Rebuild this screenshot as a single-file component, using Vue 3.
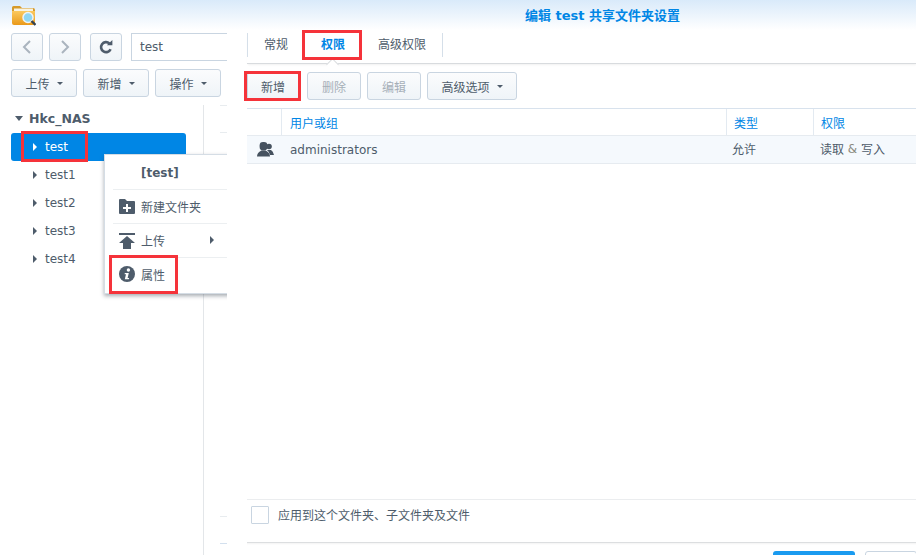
<script setup>
const leftActions = ['上传', '新增', '操作']
const folders = ['test1', 'test2', 'test3', 'test4']
const tabs = [
  { label: '常规' },
  { label: '权限', active: true },
  { label: '高级权限' },
]
</script>

<template>
  <div class="page">
    <aside class="explorer">
      <div class="title-bar">
        <svg class="app-icon" width="25" height="21" viewBox="0 0 25 21">
          <defs>
            <linearGradient id="folderFill" x1="0" y1="0" x2="0" y2="1">
              <stop offset="0" stop-color="#fbc95e" />
              <stop offset="1" stop-color="#e9991a" />
            </linearGradient>
          </defs>
          <path d="M1 2.5 Q1 1 2.5 1 H9 L11 3 H22 Q24 3 24 5 V6 H1Z" fill="#d69a2a" />
          <rect x="3" y="3.5" width="19" height="3" fill="#f8f3e2" />
          <path d="M1 6 H24 V18 Q24 20 22 20 H3 Q1 20 1 18Z" fill="url(#folderFill)" />
          <circle cx="17" cy="12.5" r="5" fill="#8fd6f2" stroke="#eef3f6" stroke-width="1.5" />
          <path d="M20.5 16 L24.5 20" stroke="#34424f" stroke-width="2.4" />
        </svg>
      </div>
      <div class="nav-row">
        <button class="btn nav-btn">
          <svg width="12" height="16" viewBox="0 0 12 16"><path d="M9 2 L3 8 L9 14" fill="none" stroke="#aab4be" stroke-width="2" /></svg>
        </button>
        <button class="btn nav-btn">
          <svg width="12" height="16" viewBox="0 0 12 16"><path d="M3 2 L9 8 L3 14" fill="none" stroke="#aab4be" stroke-width="2" /></svg>
        </button>
        <button class="btn nav-btn refresh">
          <svg width="14" height="14" viewBox="0 0 14 14">
            <path d="M11.6 9.2 A5 5 0 1 1 10.4 3.4" fill="none" stroke="#4e5c6b" stroke-width="2.6" />
            <path d="M7.8 5.2 H13.4 V0Z" fill="#4e5c6b" />
          </svg>
        </button>
        <div class="path-input">test</div>
      </div>
      <div class="action-row">
        <button v-for="a in leftActions" :key="a" class="btn action-btn">
          {{ a }}<span class="caret"></span>
        </button>
      </div>
      <div class="tree-pane">
        <div class="tree">
          <div class="tree-root"><span class="arrow-down"></span>Hkc_NAS</div>
          <div class="tree-item selected"><span class="arrow-right"></span>test</div>
          <div v-for="f in folders" :key="f" class="tree-item"><span class="arrow-right"></span>{{ f }}</div>
        </div>
        <div class="list-stub">
          <i class="stub first"></i>
          <i class="stub"></i>
          <span class="stub-gap"></span>
          <i class="stub"></i>
          <i class="stub blue"></i>
        </div>
      </div>

      <div class="context-menu">
        <div class="menu-title">[test]</div>
        <div class="menu-item">
          <svg width="16" height="15" viewBox="0 0 16 15">
            <path d="M0 1 Q0 0 1 0 H6 L8 2 H15 Q16 2 16 3 V14 Q16 15 15 15 H1 Q0 15 0 14Z" fill="#4e5c6b" />
            <path d="M7 5 H9 V8 H12 V10 H9 V13 H7 V10 H4 V8 H7Z" fill="#fff" />
          </svg>
          <span>新建文件夹</span>
        </div>
        <div class="menu-item">
          <svg width="16" height="16" viewBox="0 0 16 16">
            <rect x="0" y="0" width="16" height="2" fill="#4e5c6b" />
            <path d="M8 3 L16 10 H12 V16 H4 V10 H0Z" fill="#4e5c6b" />
          </svg>
          <span>上传</span>
          <span class="arrow-right submenu"></span>
        </div>
        <div class="menu-item">
          <svg width="16" height="16" viewBox="0 0 16 16">
            <circle cx="8" cy="8" r="8" fill="#4e5c6b" />
            <circle cx="9.4" cy="4" r="1.7" fill="#fff" />
            <path d="M5.8 7 H9.8 L8.6 12 H10.2 L9.8 13.2 H5.8 L7 8.2 H5.6Z" fill="#fff" />
          </svg>
          <span>属性</span>
        </div>
      </div>
      <div class="mark mark-test"></div>
      <div class="mark mark-prop"></div>
    </aside>

    <main class="dialog">
      <header class="dialog-title">编辑 test 共享文件夹设置</header>
      <nav class="tabs">
        <div class="tab-group">
          <div v-for="t in tabs" :key="t.label" class="tab" :class="{ active: t.active }">{{ t.label }}</div>
        </div>
      </nav>
      <div class="toolbar">
        <button class="btn tool-btn add">新增</button>
        <button class="btn tool-btn off">删除</button>
        <button class="btn tool-btn off">编辑</button>
        <button class="btn tool-btn more">高级选项<span class="caret"></span></button>
      </div>
      <div class="grid">
        <div class="grid-row grid-head">
          <div class="c-icon"></div>
          <div class="c-name">用户或组</div>
          <div class="c-type">类型</div>
          <div class="c-perm">权限</div>
        </div>
        <div class="grid-row grid-body">
          <div class="c-icon">
            <svg width="17" height="15" viewBox="0 0 17 15">
              <circle cx="12" cy="4.5" r="2.8" fill="#46525f" />
              <path d="M10 8 H14 Q16 9 17 13 H13 Q12.5 10 10 8Z" fill="#46525f" />
              <rect x="2.6" y="0" width="7.8" height="8.4" rx="3.4" fill="#46525f" />
              <path d="M0 14.6 Q0 10.6 4.4 8.6 H8.6 Q13 10.6 13 14.6Z" fill="#46525f" />
            </svg>
          </div>
          <div class="c-name">administrators</div>
          <div class="c-type">允许</div>
          <div class="c-perm">读取 <span class="amp">&amp;</span> 写入</div>
        </div>
      </div>
      <div class="spacer"></div>
      <label class="apply">
        <span class="checkbox"></span>
        <span class="apply-text">应用到这个文件夹、子文件夹及文件</span>
      </label>
      <footer class="dialog-foot">
        <span class="foot-btn primary"></span>
        <span class="foot-btn plain"></span>
      </footer>

      <div class="mark mark-tab"></div>
      <div class="mark mark-add"></div>
    </main>
  </div>
</template>

<style>
html, body {
  margin: 0;
  background: #fff;
}
</style>

<style scoped>
.page {
  display: flex;
  width: 916px;
  height: 555px;
  overflow: hidden;
  background: #fff;
  color: #4e5c6b;
  font: 12px "DejaVu Sans", "Noto Sans CJK SC", sans-serif;
}
.explorer {
  position: relative;
  flex: 0 0 227px;
  overflow: hidden;
  background: linear-gradient(#d9eafa, #fff 30px);
}
.title-bar {
  height: 33px;
  padding-left: 11px;
  box-sizing: border-box;
  padding-top: 5px;
}
.app-icon {
  display: block;
}
.btn {
  box-sizing: border-box;
  height: 28px;
  margin: 0;
  padding: 0;
  border: 1px solid #c9d5e1;
  border-radius: 3px;
  background: linear-gradient(#fbfcfd, #eff4f8);
  color: #4e5c6b;
  font: inherit;
  display: inline-flex;
  align-items: center;
  justify-content: center;
}
.nav-row {
  display: flex;
  padding-left: 11px;
}
.nav-btn {
  width: 32px;
  margin-right: 6px;
}
.refresh {
  margin-left: 3px;
  margin-right: 9px;
}
.path-input {
  flex: 1;
  height: 28px;
  box-sizing: border-box;
  border: 1px solid #c9d5e1;
  border-right: 0;
  padding-left: 8px;
  line-height: 26px;
  background: #fff;
}
.action-row {
  display: flex;
  gap: 6px;
  padding: 8px 0 0 11px;
}
.action-btn {
  width: 66px;
}
.caret {
  display: inline-block;
  margin-left: 7px;
  border-top: 3px solid #4e5c6b;
  border-left: 3px solid transparent;
  border-right: 3px solid transparent;
}
.tree-pane {
  display: flex;
  height: 450px;
  margin-top: 8px;
}
.tree {
  box-sizing: border-box;
  width: 204px;
  padding: 0 17px 0 11px;
  border-right: 1px solid #e3e6e9;
}
.tree-root {
  height: 28px;
  display: flex;
  align-items: center;
  padding: 0 0 2px 4px;
  font-weight: bold;
  font-size: 12.5px;
  box-sizing: border-box;
}
.arrow-down {
  margin-right: 6px;
  border-top: 5px solid #4e5c6b;
  border-left: 4px solid transparent;
  border-right: 4px solid transparent;
}
.arrow-right {
  display: inline-block;
  margin-right: 8px;
  border-left: 4px solid #4e5c6b;
  border-top: 4px solid transparent;
  border-bottom: 4px solid transparent;
}
.tree-item {
  height: 28px;
  display: flex;
  align-items: center;
  padding-left: 22px;
  border-radius: 3px;
}
.tree-item.selected {
  background: #0086e5;
  color: #fff;
}
.tree-item.selected .arrow-right {
  border-left-color: #fff;
}
.list-stub {
  flex: 1;
  padding-left: 16px;
}
.stub {
  display: block;
  height: 1px;
  margin-top: 26px;
  background: #e8ecef;
}
.stub.first {
  margin-top: 0;
}
.stub.blue {
  background: #d3e0ee;
}
.stub-gap {
  display: block;
  height: 357px;
}
.context-menu {
  position: absolute;
  left: 104px;
  top: 154px;
  width: 138px;
  height: 140px;
  box-sizing: border-box;
  background: #fff;
  border: 1px solid #d5dde5;
  box-shadow: 0 2px 4px rgba(60, 70, 85, 0.45);
  padding: 0 8px;
}
.menu-title {
  height: 35px;
  box-sizing: border-box;
  padding: 11px 0 0 28px;
  line-height: 15px;
  font-weight: bold;
  font-size: 12px;
  border-bottom: 1px solid #eceff1;
}
.menu-item {
  position: relative;
  height: 34px;
  box-sizing: border-box;
  display: flex;
  align-items: center;
  gap: 6px;
  padding-left: 6px;
  border-bottom: 1px solid #eceff1;
}
.menu-item:last-child {
  height: 32px;
  border-bottom: 0;
}
.submenu {
  position: absolute;
  left: 97px;
  top: 12px;
  margin: 0;
}
.mark {
  position: absolute;
  box-sizing: border-box;
  border: 3px solid #f5333a;
  pointer-events: none;
}
.mark-test {
  left: 21px;
  top: 131px;
  width: 67px;
  height: 31px;
}
.mark-prop {
  left: 109px;
  top: 255px;
  width: 69px;
  height: 39px;
}
.dialog {
  position: relative;
  flex: 1;
  display: flex;
  flex-direction: column;
  padding: 0 4px 0 20px;
  background: linear-gradient(#d9eafa, #fff 30px);
}
.dialog-title {
  height: 33px;
  box-sizing: border-box;
  padding: 8px 0 0 278px;
  color: #0086e5;
  font-weight: bold;
  font-size: 13px;
  line-height: 16px;
  white-space: pre;
}
.tabs {
  position: relative;
  height: 31px;
  box-sizing: border-box;
  border-bottom: 1px solid #d8dbde;
  box-shadow: 0 2px 2px -1px rgba(0, 0, 0, 0.06);
}
.tab-group {
  display: inline-flex;
  height: 24px;
  border-left: 1px solid #d5dfe9;
  border-right: 1px solid #d5dfe9;
}
.tab {
  position: relative;
  line-height: 25px;
  padding: 0 17px 0 16px;
}
.tab:last-child {
  padding: 0 16px;
}
.tab.active {
  color: #0086e5;
  font-weight: bold;
}
.tab.active::after {
  content: "";
  position: absolute;
  left: 23px;
  top: 27px;
  width: 8px;
  height: 8px;
  background: #fff;
  border-left: 1px solid #d8dbde;
  border-top: 1px solid #d8dbde;
  transform: rotate(45deg);
}
.toolbar {
  display: flex;
  gap: 6px;
  padding-top: 8px;
}
.tool-btn {
  width: 54px;
}
.tool-btn.add {
  width: 52px;
  margin-right: 2px;
}
.tool-btn.off {
  color: #a6afb8;
}
.tool-btn.more {
  width: 90px;
}
.grid {
  margin-top: 8px;
  border-top: 1px solid #d8e2ed;
}
.grid-row {
  display: flex;
  align-items: stretch;
}
.grid-head {
  height: 26px;
  color: #0086e5;
}
.grid-head > div {
  border-left: 1px solid #e3eaf1;
}
.grid-head > div:first-child {
  border-left: 0;
}
.grid-body {
  height: 29px;
  background: #f5f9fd;
  border-top: 1px solid #e6ebf0;
  border-bottom: 1px solid #e6ebf0;
  box-sizing: border-box;
}
.grid-row > div {
  box-sizing: border-box;
  display: flex;
  align-items: center;
}
.c-icon {
  width: 34px;
  padding-left: 10px;
}
.c-name {
  width: 445px;
  padding-left: 8px;
}
.grid-body .c-name {
  padding: 0 0 0 9px;
}
.c-type {
  width: 87px;
  padding-left: 7px;
}
.grid-body .c-type {
  padding-left: 6px;
  padding-bottom: 3px;
}
.c-perm {
  flex: 1;
  padding-left: 7px;
  white-space: pre;
}
.grid-body .c-perm {
  padding-bottom: 2px;
}
.amp {
  color: #8a8a80;
}
.spacer {
  flex: 1;
}
.apply {
  height: 43px;
  box-sizing: border-box;
  border-top: 1px solid #ebedef;
  display: flex;
  align-items: flex-start;
  padding: 6px 0 0 4px;
}
.apply-text {
  line-height: 20px;
}
.checkbox {
  width: 18px;
  height: 18px;
  box-sizing: border-box;
  border: 1px solid #c9d5e1;
  border-radius: 1px;
  margin-right: 9px;
}
.dialog-foot {
  height: 13px;
  border-top: 1px solid #dcdee0;
  box-shadow: inset 0 2px 2px -1px rgba(0, 0, 0, 0.05);
  padding: 8px 0 0 526px;
  box-sizing: border-box;
  display: flex;
  gap: 10px;
}
.foot-btn {
  height: 20px;
  border-radius: 3px;
}
.primary {
  width: 82px;
  background: #1a9bf0;
}
.plain {
  width: 50px;
  border: 1px solid #c9d5e1;
}
.mark-tab {
  left: 75px;
  top: 30px;
  width: 60px;
  height: 30px;
}
.mark-add {
  left: 17px;
  top: 71px;
  width: 57px;
  height: 30px;
}
</style>
